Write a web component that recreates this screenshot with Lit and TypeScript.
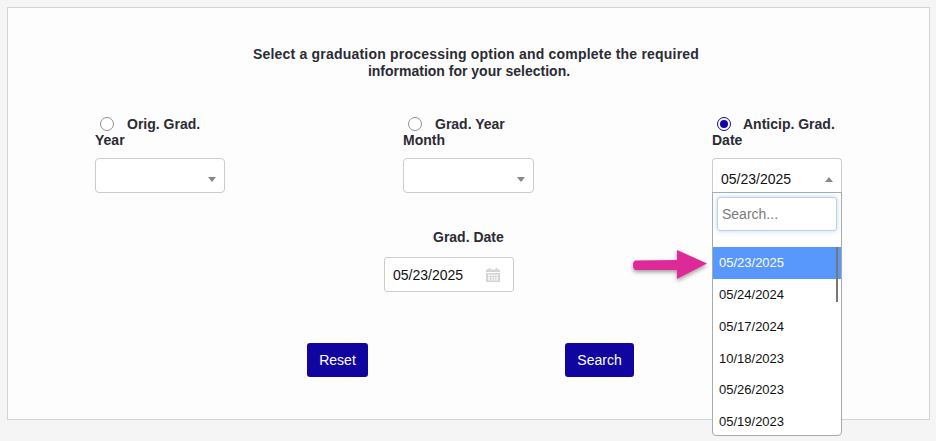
import { LitElement, html, css } from "lit";
import { customElement } from "lit/decorators.js";

const OPTIONS = ["05/23/2025", "05/24/2024", "05/17/2024", "10/18/2023", "05/26/2023", "05/19/2023"];

@customElement("app-root")
export class AppRoot extends LitElement {
  static styles = css`
    :host { display: block; width: 936px; height: 441px; background: #f5f5f5; overflow: hidden;
      font-family: "Liberation Sans", Arial, sans-serif; font-size: 14px; color: #000; position: relative; }
    .card { box-sizing: border-box; margin: 7px 6px 0 7px; width: 923px; height: 413px; background: #fdfdfd;
      border: 1px solid #d3d3d3; position: relative; }
    .heading { display: flex; flex-direction: column; align-items: center; width: 446px; margin-left: 245px;
      padding-top: 38px; font-weight: 700; color: #2b2b33; line-height: 17px; white-space: nowrap; }
    .heading .l1 { letter-spacing: 0.205px; }
    .heading .l2 { padding-right: 14px; }
    .cols { display: grid; grid-template-columns: 308px 309px 130px; padding-left: 87px; margin-top: 36px; }
    .label { font-weight: 700; color: #2b2b33; line-height: 16px; width: 130px; white-space: nowrap; }
    .label .first { display: flex; align-items: center; padding-left: 5px; }
    .radio { box-sizing: border-box; width: 14px; height: 14px; border-radius: 50%; border: 1px solid #8f8f9d;
      background: #fff; margin-right: 13px; flex: none; }
    .radio.on { border: 1px solid #10069f; padding: 2px; background-clip: content-box; background-color: #10069f; margin-right: 12px; }
    .select { box-sizing: border-box; width: 130px; height: 35px; margin-top: 10px; background: #fff;
      border: 1px solid #ccc; border-radius: 4px; display: flex; align-items: center; justify-content: space-between;
      padding: 7px 8px 0 8px; position: relative; color: #111; }
    .select.wide { width: 131px; }
    .select.open { border-radius: 4px 4px 0 0; border-bottom-color: #aaa; }
    .caret { width: 0; height: 0; border-left: 4px solid transparent; border-right: 4px solid transparent;
      border-top: 5px solid #888; margin-left: auto; margin-top: 1px; }
    .caret.up { border-top: 0; border-bottom: 5px solid #888; margin-top: 0; }
    .date-block { margin-top: 36px; margin-left: 376px; width: 130px; }
    .date-label { font-weight: 700; color: #2b2b33; line-height: 17px; padding-left: 49px; white-space: nowrap; }
    .date-input { box-sizing: border-box; height: 35px; margin-top: 11px; background: #fff; border: 1px solid #ccc;
      border-radius: 3px; display: flex; align-items: center; justify-content: space-between; padding: 0 13px 0 8px; color: #111; }
    .buttons { display: flex; margin-top: 51px; margin-left: 299px; gap: 197px; }
    .btn { box-sizing: border-box; height: 34px; background: #10069f; color: #fff; border-radius: 3px; border: 0;
      display: flex; align-items: center; justify-content: center; font: 14px "Liberation Sans", Arial, sans-serif; padding: 0; }
    .btn.reset { width: 61px; }
    .btn.search { width: 69px; }
    .dropdown { box-sizing: border-box; position: absolute; left: 712px; top: 192px; width: 130px; height: 244px;
      background: #fff; border: 1px solid #aaa; border-radius: 0 0 4px 4px; overflow: hidden; }
    .search-box { box-sizing: border-box; width: 120px; height: 34px; margin: 4px 0 0 4px; border: 1px solid #c3cfde;
      border-radius: 3px; padding-left: 4px; display: flex; align-items: center; color: #7a7a7a; background: #fff;
      box-shadow: 0 0 5px rgba(102, 175, 233, 0.45); }
    .list { margin-top: 16px; position: relative; }
    .opt { height: 31.7px; display: flex; align-items: center; padding-left: 6px; font-size: 13px; color: #111; }
    .opt.active { background: #5897fb; color: #fff; height: 32px; box-sizing: border-box; padding-bottom: 1px; }
    .thumb { position: absolute; right: 3px; top: 0; width: 2px; height: 55px; background: #777; }
    .arrow { position: absolute; left: 630px; top: 246px; }
    svg { display: block; }
  `;

  private col(text1: string, text2: string, on: boolean, value: string, wide = false) {
    return html`<div>
      <div class="label">
        <div class="first"><span class="radio ${on ? "on" : ""}"></span>${text1}</div>
        <div>${text2}</div>
      </div>
      <div class="select ${on ? "open" : ""} ${wide ? "wide" : ""}">
        ${value}<span class="caret ${on ? "up" : ""}"></span>
      </div>
    </div>`;
  }

  render() {
    return html`
      <div class="card">
        <div class="heading">
          <span class="l1">Select a graduation processing option and complete the required</span>
          <span class="l2">information for your selection.</span>
        </div>
        <div class="cols">
          ${this.col("Orig. Grad.", "Year", false, "")}
          ${this.col("Grad. Year", "Month", false, "", true)}
          ${this.col("Anticip. Grad.", "Date", true, "05/23/2025")}
        </div>
        <div class="date-block">
          <div class="date-label">Grad. Date</div>
          <div class="date-input">
            05/23/2025
            <svg width="14" height="14" viewBox="0 0 14 14" fill="#d4d4d4">
              <rect x="2.5" y="0" width="2" height="2.5" rx=".5"/><rect x="9.5" y="0" width="2" height="2.5" rx=".5"/>
              <path d="M1 1.5h12a1 1 0 0 1 1 1V4H0V2.5a1 1 0 0 1 1-1z"/>
              <path fill-rule="evenodd" d="M0 5h14v8a1 1 0 0 1-1 1H1a1 1 0 0 1-1-1zM2 6.500v1.500h2V6.500zM5 6.500v1.500h1.700V6.500zM7.700 6.500v1.500h1.700V6.500zM10.300 6.500v1.500h1.800V6.500zM2 9v1.500h2V9zM5 9v1.500h1.700V9zM7.700 9v1.500h1.700V9zM10.300 9v1.500h1.800V9zM2 11.300v1.300h2v-1.300zM5 11.300v1.300h1.700v-1.300zM7.700 11.300v1.300h1.700v-1.300zM10.300 11.300v1.300h1.800v-1.300z"/>
            </svg>
          </div>
        </div>
        <div class="buttons">
          <button class="btn reset">Reset</button>
          <button class="btn search">Search</button>
        </div>
      </div>
      <div class="dropdown">
        <div class="search-box">Search...</div>
        <div class="list">
          ${OPTIONS.map((o, i) => html`<div class="opt ${i === 0 ? "active" : ""}">${o}</div>`)}
          <div class="thumb"></div>
        </div>
      </div>
      <svg class="arrow" width="84" height="44" viewBox="0 0 84 44">
        <defs><filter id="s" x="-20%" y="-30%" width="140%" height="170%"><feDropShadow dx="0" dy="2" stdDeviation="2" flood-color="#000" flood-opacity=".4"/></filter></defs>
        <path filter="url(#s)" fill="#de2a96" d="M6 14.500 L47 14 V4 L77 17.500 L47 33 V24 L6 24 Q3 24 3 19 Q3 14.500 6 14.500Z"/>
      </svg>
    `;
  }
}
